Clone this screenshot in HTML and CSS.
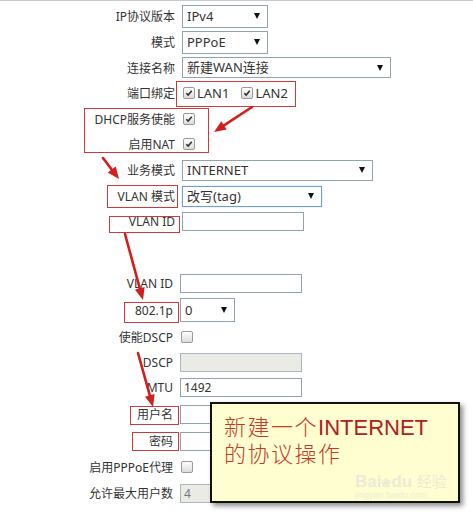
FILE: index.html
```html
<!DOCTYPE html>
<html lang="zh">
<head>
<meta charset="utf-8">
<link rel="stylesheet" href="styles.css">
</head>
<body>
<div class="page">
  <div class="form">
    <div class="row"><span class="label">IP协议版本</span><div class="select sel-short">IPv4<span class="caret"></span></div></div>
    <div class="row"><span class="label">模式</span><div class="select sel-short">PPPoE<span class="caret"></span></div></div>
    <div class="row row-25"><span class="label">连接名称</span><div class="select sel-long">新建WAN连接<span class="caret"></span></div></div>
    <div class="row"><span class="label">端口绑定</span>
      <div class="checks">
        <span class="cb on"><svg viewBox="0 0 12 12"><path d="M2.8 6.2l2.2 2.3 4.3-5.2"/></svg></span><span class="cb-text">LAN1</span>
        <span class="cb on gap"><svg viewBox="0 0 12 12"><path d="M2.8 6.2l2.2 2.3 4.3-5.2"/></svg></span><span class="cb-text">LAN2</span>
      </div>
    </div>
    <div class="row row-25"><span class="label">DHCP服务使能</span><span class="cb on"><svg viewBox="0 0 12 12"><path d="M2.8 6.2l2.2 2.3 4.3-5.2"/></svg></span></div>
    <div class="row"><span class="label">启用NAT</span><span class="cb on"><svg viewBox="0 0 12 12"><path d="M2.8 6.2l2.2 2.3 4.3-5.2"/></svg></span></div>
    <div class="row"><span class="label">业务模式</span><div class="select sel-mid">INTERNET<span class="caret"></span></div></div>
    <div class="row"><span class="label">VLAN 模式</span><div class="select sel-vlan focus">改写(tag)<span class="caret"></span></div></div>
    <div class="row row-25"><span class="label">VLAN ID</span><div class="input in-top"></div></div>
  </div>

  <div class="form form-b">
    <div class="row"><span class="label">VLAN ID</span><div class="input"></div></div>
    <div class="row row-28"><span class="label">802.1p</span><div class="select sel-tiny">0<span class="caret"></span></div></div>
    <div class="row"><span class="label">使能DSCP</span><span class="cb"></span></div>
    <div class="row row-24"><span class="label">DSCP</span><div class="input disabled"></div></div>
    <div class="row"><span class="label">MTU</span><div class="input">1492</div></div>
    <div class="row row-28"><span class="label">用户名</span><div class="input short"></div></div>
    <div class="row"><span class="label">密码</span><div class="input short"></div></div>
    <div class="row"><span class="label">启用PPPoE代理</span><span class="cb"></span></div>
    <div class="row"><span class="label">允许最大用户数</span><div class="input disabled">4</div></div>
  </div>

  <div class="mark mark-port"></div>
  <div class="mark mark-dhcp"></div>
  <div class="mark mark-vmode"></div>
  <div class="mark mark-vid"></div>
  <div class="mark mark-8021p"></div>
  <div class="mark mark-user"></div>
  <div class="mark mark-pwd"></div>

  <svg class="arrows" viewBox="0 0 473 512" width="473" height="512">
    <g class="arrow">
      <line x1="252" y1="106" x2="224" y2="124.4"/>
      <polygon points="214,131 226.7,128.6 221.3,120.2"/>
    </g>
    <g class="arrow">
      <line x1="103" y1="157" x2="111.7" y2="168.5"/>
      <polygon points="119,178 107.7,171.5 115.7,165.5"/>
    </g>
    <g class="arrow">
      <line x1="125" y1="233" x2="139.8" y2="287.4"/>
      <polygon points="143,299 135,288.7 144.6,286.1"/>
    </g>
    <g class="arrow">
      <line x1="138" y1="352" x2="149.8" y2="394.4"/>
      <polygon points="153,406 145,395.7 154.6,393.1"/>
    </g>
  </svg>

  <div class="note">
    <div class="note-text"><span class="cjk">新建一个</span><span class="latin">INTERNET</span><br><span class="cjk">的协议操作</span></div>
    <div class="watermark"><span class="wm-logo">Bai<span class="paw">❀</span>du</span> <span class="wm-cn">经验</span><div class="wm-url">jingyan.baidu.com</div></div>
  </div>
</div>
</body>
</html>
```

FILE: styles.css
```css
html, body {
  margin: 0;
  padding: 0;
  background: #ffffff;
}

.page {
  position: relative;
  width: 473px;
  height: 512px;
  overflow: hidden;
  border-top: 1px solid #c9c9c9;
  box-sizing: border-box;
  font-family: "Noto Sans", "Noto Sans CJK SC", sans-serif;
  color: #333333;
}

.form {
  padding-top: 2px;
  display: flex;
  flex-direction: column;
}

.form-b {
  margin-top: 34px;
}

.row {
  display: flex;
  align-items: center;
  height: 26px;
}

.row-25 { height: 25px; }
.row-24 { height: 24px; }
.row-28 { height: 28px; }

.label {
  width: 175px;
  margin-right: 7px;
  text-align: right;
  font-size: 12px;
  white-space: nowrap;
  flex: none;
}

.form-b .label {
  width: 173px;
}

.select {
  position: relative;
  box-sizing: border-box;
  height: 22px;
  border: 1px solid #8fa4ae;
  background: #ffffff;
  font-size: 13px;
  line-height: 20px;
  padding-left: 4px;
  white-space: nowrap;
}

.sel-short { width: 86px; height: 23px; line-height: 21px; }
.sel-long { width: 209px; height: 21px; line-height: 19px; }
.sel-mid { width: 191px; height: 21px; line-height: 19px; }
.sel-vlan { width: 140px; height: 21px; line-height: 19px; }
.sel-tiny { width: 55px; height: 24px; line-height: 22px; }

.select.focus {
  border: 1px solid #6f9cd4;
  box-shadow: 0 0 1px #9fc0e8;
}

.caret {
  position: absolute;
  right: 7px;
  top: 50%;
  margin-top: -3px;
  width: 0;
  height: 0;
  border-left: 3.5px solid transparent;
  border-right: 3.5px solid transparent;
  border-top: 6px solid #111111;
}

.input {
  box-sizing: border-box;
  width: 122px;
  height: 19px;
  border: 1px solid #8fa4ae;
  background: #ffffff;
  font-size: 12px;
  line-height: 17px;
  padding-left: 3px;
}

.input.short {
  width: 40px;
}

.in-top { width: 122px; }

.input.disabled {
  background: #ebebe6;
  border-color: #a9b6bb;
  color: #777777;
}

.checks {
  display: flex;
  align-items: center;
}

.cb {
  box-sizing: border-box;
  width: 12px;
  height: 12px;
  border: 1px solid #9a9a9a;
  border-radius: 2px;
  background: linear-gradient(#fdfdfd, #dcdcdc);
  margin-left: 1px;
  display: inline-flex;
  flex: none;
}

.cb svg {
  width: 10px;
  height: 10px;
}

.cb svg path {
  fill: none;
  stroke: #2c2c2c;
  stroke-width: 1.8;
}

.cb.gap {
  margin-left: 12px;
}

.cb-text {
  font-size: 13px;
  margin-left: 2px;
}

.mark {
  position: absolute;
  border: 1px solid #cc3b3b;
  box-sizing: border-box;
}

.mark-port { left: 176px; top: 80px; width: 120px; height: 26px; }
.mark-dhcp { left: 84px; top: 107px; width: 125px; height: 45px; }
.mark-vmode { left: 107px; top: 184px; width: 71px; height: 23px; }
.mark-vid { left: 109px; top: 215px; width: 71px; height: 17px; }
.mark-8021p { left: 124px; top: 301px; width: 55px; height: 21px; }
.mark-user { left: 130px; top: 405px; width: 49px; height: 19px; }
.mark-pwd { left: 132px; top: 431px; width: 47px; height: 19px; }

.arrows {
  position: absolute;
  left: 0;
  top: 0;
  pointer-events: none;
}

.arrow line {
  stroke: #d41d1d;
  stroke-width: 2.6;
  stroke-linecap: round;
}

.arrow polygon {
  fill: #d41d1d;
}

.note {
  position: absolute;
  left: 210px;
  top: 401px;
  width: 250px;
  height: 101px;
  box-sizing: border-box;
  border: 2px solid #111111;
  background: #fffed0;
  box-shadow: 3px 3px 5px rgba(0, 0, 0, 0.45);
}

.note-text {
  padding: 9px 0 0 12px;
  font-size: 22px;
  line-height: 25px;
  color: #c43a2a;
  white-space: nowrap;
}

.note-text .cjk {
  font-family: "Noto Sans CJK SC", sans-serif;
  font-weight: 300;
  letter-spacing: 1.5px;
}

.note-text .latin {
  font-family: "Liberation Sans", sans-serif;
  color: #b02020;
}

.watermark {
  position: absolute;
  left: 143px;
  top: 66px;
  color: #ecebd6;
  font-family: "Liberation Sans", sans-serif;
  white-space: nowrap;
}

.wm-logo {
  font-size: 17px;
  font-weight: bold;
}

.paw {
  font-size: 12px;
}

.wm-cn {
  font-family: "Noto Sans CJK SC", sans-serif;
  font-size: 15px;
}

.wm-url {
  font-size: 9px;
  line-height: 10px;
  margin-top: -2px;
}
```
